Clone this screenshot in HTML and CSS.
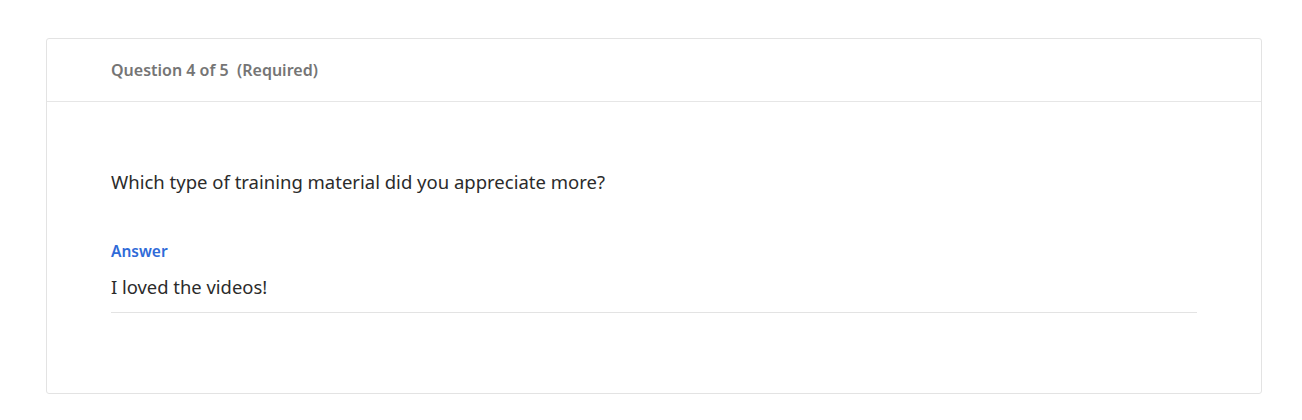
FILE: index.html
```html
<!DOCTYPE html>
<html>
<head>
<meta charset="utf-8">
<link rel="stylesheet" href="styles.css">
</head>
<body>
<div class="page">
  <section class="card">
    <header class="card-header">Question 4 of 5&nbsp;&nbsp;(Required)</header>
    <div class="card-body">
      <p class="question">Which type of training material did you appreciate more?</p>
      <div class="answer-label">Answer</div>
      <div class="answer">I loved the videos!</div>
    </div>
  </section>
</div>
</body>
</html>
```
FILE: styles.css
```css
html, body {
  margin: 0;
  padding: 0;
  background: #ffffff;
  font-family: "Noto Sans", "Open Sans", sans-serif;
}
.page {
  padding: 38px 40px 0 46px;
}
.card {
  width: 1216px;
  height: 356px;
  box-sizing: border-box;
  border: 1px solid #e3e3e3;
  border-radius: 3px;
  background: #fff;
}
.card-header {
  height: 63px;
  box-sizing: border-box;
  border-bottom: 1px solid #e6e6e6;
  padding: 0 64px;
  display: flex;
  align-items: center;
  font-size: 16px;
  font-weight: 600;
  color: #757575;
}
.card-body {
  padding: 0 64px;
}
.question {
  margin: 68px 0 0;
  font-size: 18.5px;
  line-height: 24px;
  color: #2b2b2b;
}
.answer-label {
  margin-top: 47px;
  font-size: 15.5px;
  line-height: 20px;
  font-weight: 600;
  color: #2f6bd8;
}
.answer {
  margin-top: 14px;
  font-size: 18.4px;
  line-height: 24px;
  color: #2b2b2b;
  padding-bottom: 13px;
  border-bottom: 1px solid #e3e3e3;
}
```
